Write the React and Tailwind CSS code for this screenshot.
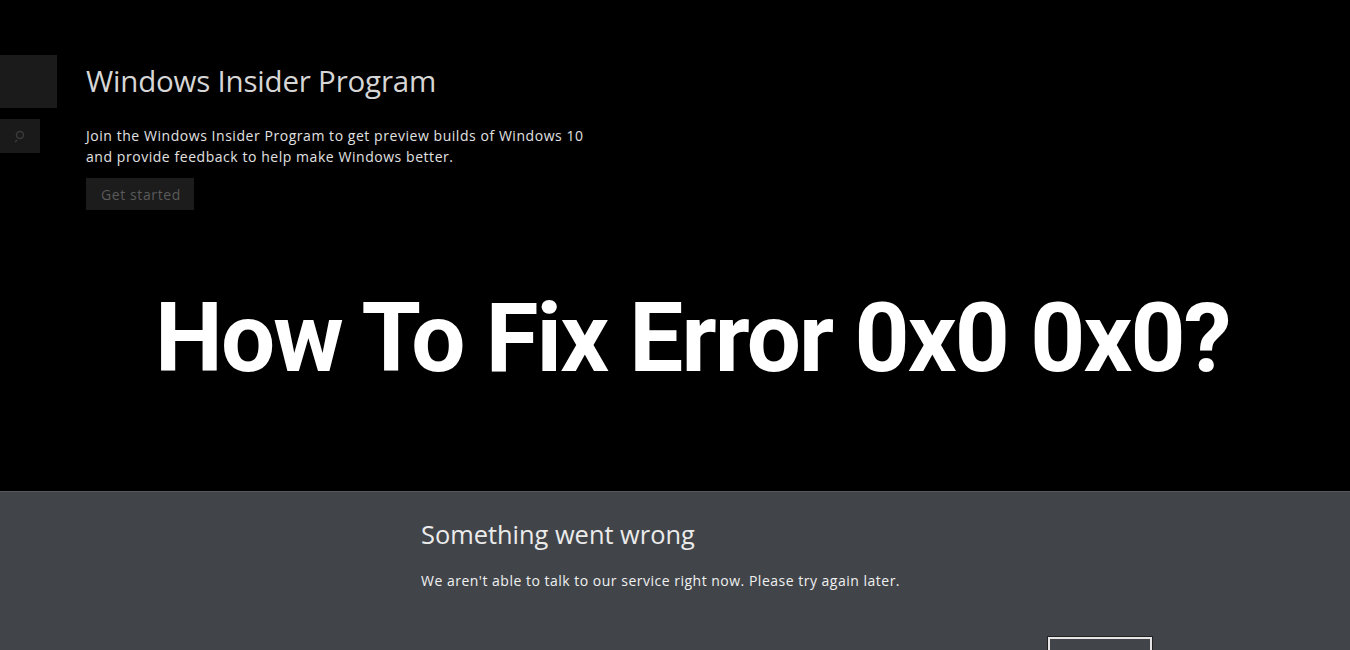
import React from "react";

const App = () => {
  return (
    <div
      className="w-[1350px] h-[650px] overflow-hidden bg-black flex flex-col"
      style={{ fontFamily: '"Open Sans", "Noto Sans", sans-serif' }}
    >
      {/* Top: Windows Insider settings page */}
      <section className="h-[491px] shrink-0 flex flex-col">
        <div className="flex pt-[55px]">
          {/* Sidebar stubs */}
          <div className="w-[86px] flex flex-col gap-[11px]">
            <div className="w-[57px] h-[53px] bg-[#1b1b1b]" />
            <div className="w-[40px] h-[34px] bg-[#1a1a1a] flex items-center justify-center">
              <svg width="14" height="14" viewBox="0 0 14 14" fill="none" stroke="#3a3a3a" strokeWidth="1.5">
                <circle cx="7" cy="6" r="3.5" />
                <path d="M4 11 L2 13" />
              </svg>
            </div>
          </div>

          <div className="flex flex-col">
            <h2 className="text-[29.5px] leading-[36px] text-[#d6d6d6] mt-[8px] tracking-[-0.2px]">
              Windows Insider Program
            </h2>
            <p className="text-[14px] leading-[21px] tracking-[0.55px] text-[#e2e2e2] mt-[26px]">
              Join the Windows Insider Program to get preview builds of Windows 10
              <br />
              and provide feedback to help make Windows better.
            </p>
            <button className="mt-[11px] w-[108px] h-[32px] bg-[#1c1c1c] text-[#5a5a5a] text-[14px] tracking-[0.6px] text-left pl-[15px]">
              Get started
            </button>
          </div>
        </div>

        <h1
          className="mt-[73px] pl-[155px] text-white font-bold text-[96px] leading-[110px] tracking-[-1.8px]"
          style={{ fontFamily: 'Roboto, "Liberation Sans", sans-serif' }}
        >
          How To Fix Error 0x0 0x0?
        </h1>
      </section>

      {/* Bottom: error panel */}
      <section className="flex-1 bg-[#41454a] border-t border-[#55595e]">
        <div className="pl-[421px] pt-[25px] flex flex-col">
          <h3 className="text-[25.4px] leading-[34px] text-[#ebebeb]">Something went wrong</h3>
          <p className="mt-[20px] text-[14px] leading-[20px] tracking-[0.5px] text-[#f0f0f0]">
            We aren&apos;t able to talk to our service right now. Please try again later.
          </p>
          <div className="flex justify-end w-[731px] mt-[46px]">
            <button className="w-[104px] h-[32px] shrink-0 border-2 border-[#e6e6e6] outline outline-1 outline-[#222]" />
          </div>
        </div>
      </section>
    </div>
  );
};

export default App;
